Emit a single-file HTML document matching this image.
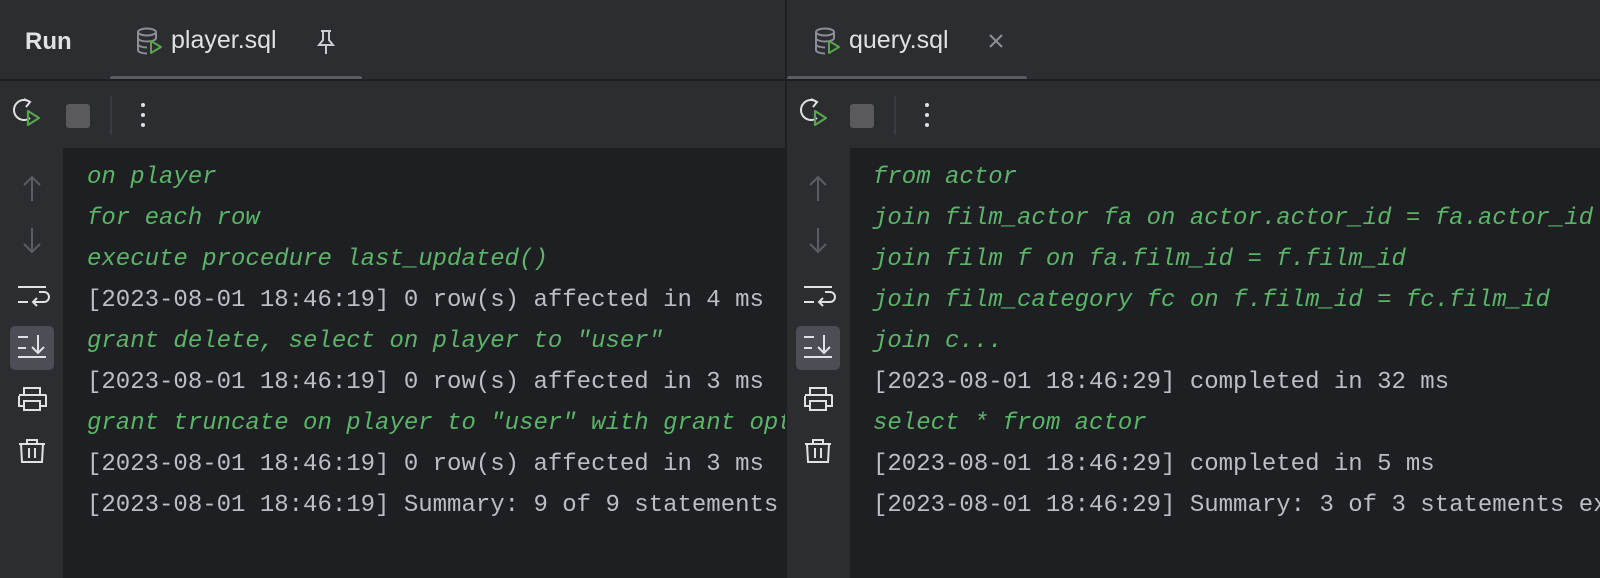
<!DOCTYPE html>
<html><head><style>
*{margin:0;padding:0;box-sizing:border-box}
body{width:1600px;height:578px;background:#1e1f22;overflow:hidden;font-family:"Liberation Sans",sans-serif;position:relative}
.panel{position:absolute;top:0;height:578px;overflow:hidden}
.hdr{position:absolute;left:0;right:0;top:0;height:79px;background:#2b2d30}
.sep{position:absolute;left:0;right:0;top:79px;height:2px;background:#1e1f22}
.tb{position:absolute;left:0;right:0;top:81px;height:67px;background:#2b2d30}
.gut{position:absolute;left:0;width:63px;top:148px;bottom:0;background:#2b2d30}
.content{position:absolute;left:87px;top:157px;font-family:"Liberation Mono",monospace;font-size:24px;color:#bcbec4}
.content div{height:41px;line-height:41px;white-space:pre}
.g{color:#5bb468;font-style:italic}
.tabt{position:absolute;top:26px;font-size:25px;color:#dfe1e5}
.ul{position:absolute;top:76px;height:5px;border-radius:3px;background:#595c63}
</style></head><body>
<div class="panel" style="left:0;width:786px">
<div class="hdr">
<div style="position:absolute;left:25px;top:28px;font-size:24px;font-weight:bold;color:#dfe1e5">Run</div>
<svg style="position:absolute;left:134px;top:26px" width="32" height="32" viewBox="0 0 32 32"><ellipse cx="13" cy="6" rx="9" ry="3.5" fill="none" stroke="#8c8f94" stroke-width="2"/><path d="M4 6v18c0 2 4 3.5 9 3.5M22 6v6M4 12c0 2 4 3.5 9 3.5s9-1.5 9-3.5M4 18c0 2 4 3.5 9 3.5" fill="none" stroke="#8c8f94" stroke-width="2"/><path d="M17 15l10 6-10 6z" fill="none" stroke="#57a64a" stroke-width="2" stroke-linejoin="round"/></svg>
<div class="tabt" style="left:171px">player.sql</div>
<svg style="position:absolute;left:314px;top:29px" width="24" height="28" viewBox="0 0 24 28"><path d="M7 2h10M9 2v9l-4 5h14l-4-5V2M12 16v9" fill="none" stroke="#c9ccd1" stroke-width="2"/></svg>
<div class="ul" style="left:110px;width:252px"></div>
</div>
<div class="sep"></div>
<div class="tb">
<svg style="position:absolute;left:10px;top:16px" width="34" height="34" viewBox="0 0 34 34"><path d="M20 21A10 10 0 1 1 20 5M14 2l6 3-4 5" fill="none" stroke="#dfe1e5" stroke-width="2"/><path d="M18 14l11 7-11 7z" fill="none" stroke="#57a64a" stroke-width="2.2" stroke-linejoin="round"/></svg>
<div style="position:absolute;left:66px;top:23px;width:24px;height:24px;border-radius:3px;background:#5a5a5c"></div>
<div style="position:absolute;left:110px;top:15px;width:2px;height:39px;background:#393b40"></div>
<div style="position:absolute;left:141px;top:22px;width:4px;height:4px;border-radius:2px;background:#dfe1e5;box-shadow:0 10px 0 #dfe1e5,0 20px 0 #dfe1e5"></div>
</div>
<div class="gut">
<svg width="63" height="430" viewBox="0 0 63 430"><g fill="none" stroke-width="2">
<path d="M32 29v24M24 37l8-8 8 8" stroke="#5a5d63"/>
<path d="M32 80v24M24 96l8 8 8-8" stroke="#5a5d63"/>
<path d="M18 139h28M18 154h10M34 154h10a5 5 0 0 0 0-10h-5M37 150l-4 4 4 4" stroke="#dfe1e5"/>
</g>
<rect x="10" y="178" width="44" height="44" rx="5" fill="#4b4e55"/>
<g fill="none" stroke="#dfe1e5" stroke-width="2"><path d="M18 189h10M18 200h8M18 209h28M38 187v18M32 199l6 6 6-6"/>
<g transform="translate(0,8)"><path d="M24 239v-7h16v7M19 239h26a1 1 0 0 1 1 1v10h-5M23 250h-4v-10M24 245h16v9H24z"/>
<path d="M19 288h26M27 288v-4h10v4M21 288l1 18h20l1-18M29 292v10M35 292v10"/></g></g>
</svg>
</div>
<div class="content">
<div class="g">on player</div>
<div class="g">for each row</div>
<div class="g">execute procedure last_updated()</div>
<div>[2023-08-01 18:46:19] 0 row(s) affected in 4 ms</div>
<div class="g">grant delete, select on player to "user"</div>
<div>[2023-08-01 18:46:19] 0 row(s) affected in 3 ms</div>
<div class="g">grant truncate on player to "user" with grant option</div>
<div>[2023-08-01 18:46:19] 0 row(s) affected in 3 ms</div>
<div>[2023-08-01 18:46:19] Summary: 9 of 9 statements executed</div>
</div>
</div>
<div style="position:absolute;left:785px;top:0;width:2px;height:578px;background:#1e1f22"></div>
<div class="panel" style="left:787px;width:813px">
<div class="hdr">
<svg style="position:absolute;left:25px;top:26px" width="32" height="32" viewBox="0 0 32 32"><ellipse cx="13" cy="6" rx="9" ry="3.5" fill="none" stroke="#8c8f94" stroke-width="2"/><path d="M4 6v18c0 2 4 3.5 9 3.5M22 6v6M4 12c0 2 4 3.5 9 3.5s9-1.5 9-3.5M4 18c0 2 4 3.5 9 3.5" fill="none" stroke="#8c8f94" stroke-width="2"/><path d="M17 15l10 6-10 6z" fill="none" stroke="#57a64a" stroke-width="2" stroke-linejoin="round"/></svg>
<div class="tabt" style="left:62px">query.sql</div>
<svg style="position:absolute;left:201px;top:33px" width="16" height="16" viewBox="0 0 16 16"><path d="M2 2l12 12M14 2L2 14" stroke="#8c8f94" stroke-width="2"/></svg>
<div class="ul" style="left:0;width:240px"></div>
</div>
<div class="sep"></div>
<div class="tb">
<svg style="position:absolute;left:10px;top:16px" width="34" height="34" viewBox="0 0 34 34"><path d="M20 21A10 10 0 1 1 20 5M14 2l6 3-4 5" fill="none" stroke="#dfe1e5" stroke-width="2"/><path d="M18 14l11 7-11 7z" fill="none" stroke="#57a64a" stroke-width="2.2" stroke-linejoin="round"/></svg>
<div style="position:absolute;left:63px;top:23px;width:24px;height:24px;border-radius:3px;background:#5a5a5c"></div>
<div style="position:absolute;left:107px;top:15px;width:2px;height:39px;background:#393b40"></div>
<div style="position:absolute;left:138px;top:22px;width:4px;height:4px;border-radius:2px;background:#dfe1e5;box-shadow:0 10px 0 #dfe1e5,0 20px 0 #dfe1e5"></div>
</div>
<div class="gut">
<svg width="63" height="430" viewBox="0 0 63 430"><g fill="none" stroke-width="2">
<path d="M31 29v24M23 37l8-8 8 8" stroke="#5a5d63"/>
<path d="M31 80v24M23 96l8 8 8-8" stroke="#5a5d63"/>
<path d="M17 139h28M17 154h10M33 154h10a5 5 0 0 0 0-10h-5M36 150l-4 4 4 4" stroke="#dfe1e5"/>
</g>
<rect x="9" y="178" width="44" height="44" rx="5" fill="#4b4e55"/>
<g fill="none" stroke="#dfe1e5" stroke-width="2"><path d="M17 189h10M17 200h8M17 209h28M37 187v18M31 199l6 6 6-6"/>
<g transform="translate(0,8)"><path d="M23 239v-7h16v7M18 239h26a1 1 0 0 1 1 1v10h-5M22 250h-4v-10M23 245h16v9H23z"/>
<path d="M18 288h26M26 288v-4h10v4M20 288l1 18h20l1-18M28 292v10M34 292v10"/></g></g>
</svg>
</div>
<div class="content" style="left:86px">
<div class="g">from actor</div>
<div class="g">join film_actor fa on actor.actor_id = fa.actor_id</div>
<div class="g">join film f on fa.film_id = f.film_id</div>
<div class="g">join film_category fc on f.film_id = fc.film_id</div>
<div class="g">join c...</div>
<div>[2023-08-01 18:46:29] completed in 32 ms</div>
<div class="g">select * from actor</div>
<div>[2023-08-01 18:46:29] completed in 5 ms</div>
<div>[2023-08-01 18:46:29] Summary: 3 of 3 statements executed</div>
</div>
</div>
</body></html>
